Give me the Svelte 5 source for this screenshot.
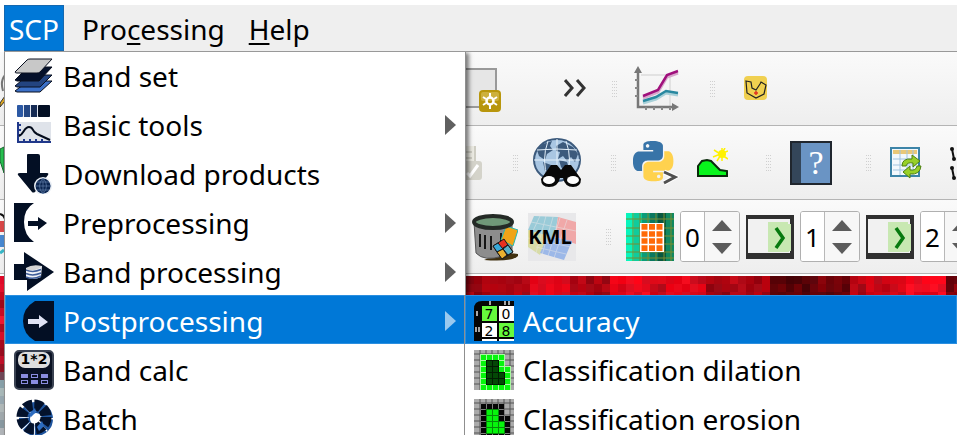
<script>
  const menus = [
    { before: 'Pro', key: 'c', after: 'essing' },
    { before: '', key: 'H', after: 'elp' }
  ];

  const entries = [
    { label: 'Band set', icon: bandSet },
    { label: 'Basic tools', icon: basicTools, sub: true },
    { label: 'Download products', icon: download },
    { label: 'Preprocessing', icon: preprocessing, sub: true },
    { label: 'Band processing', icon: bandProcessing, sub: true },
    { label: 'Postprocessing', icon: postprocessing, sub: true, active: true },
    { label: 'Band calc', icon: bandCalc },
    { label: 'Batch', icon: batch }
  ];

  const subEntries = [
    { label: 'Accuracy', icon: accuracy, active: true },
    { label: 'Classification dilation', icon: dilation },
    { label: 'Classification erosion', icon: erosion }
  ];

  let stretch = $state([
    { name: 'Band', value: '0' },
    { name: 'Minimum', value: '1' },
    { name: 'Maximum', value: '2' }
  ]);

  const step = (field, by) => (field.value = String(Number(field.value) + by));

  // raster cells of the map canvas: bright and dark stretches of red
  const brightness = [0.5, 0.55, 0.6, 0.85, 0.8, 0.65, 0.55, 0.8, 0.85, 0.7, 0.8, 0.75, 0.5, 0.6, 0.55, 0.2, 0.18, 0.3, 0.25, 0.6, 0.7, 0.7, 0.9, 0.9, 0.35];
  const cells = [];
  let seed = 11;
  const rnd = () => (seed = (seed * 16807) % 2147483647) / 2147483647;
  for (let row = 0; row < 3; row++) {
    for (let col = 0; col < 62; col++) {
      const b = brightness[Math.floor(col / 2.5)];
      const r = Math.round(Math.min(255, 50 + b * 215 + (rnd() - 0.5) * 50));
      const g = Math.round(rnd() * 18 * b);
      cells.push({ x: 466 + col * 8, y: row * 8, fill: `rgb(${r},${g},${Math.round(g + b * 22)})` });
    }
  }
  const edge = ['#e00a28', '#e4102c', '#c80a20', '#a00818', '#c80c24', '#f01830', '#b00c20', '#d81028', '#a80a1c', '#980c1e', '#c01028', '#901424', '#704858', '#88a0a8', '#a8b8b8', '#98a8b0', '#b0b8b8', '#a0a8ac', '#8898a0', '#b0b4b8'];

  const dilationInner = ['2,2', '3,2', '2,3', '3,3', '2,4', '3,4', '4,4', '2,5', '3,5', '4,5'];
  const dilationOuter = ['1,1', '2,1', '3,1', '4,1', '1,2', '4,2', '1,3', '4,3', '5,3', '1,4', '5,4', '1,5', '5,5', '1,6', '2,6', '3,6', '4,6', '5,6'];
  const at = (cell, axis) => Number(cell.split(',')[axis]) * 6 + 1;
</script>

{#snippet bandSet()}
  <svg class="icon" viewBox="0 0 40 40" aria-hidden="true">
    <g stroke="#0a1020" stroke-width="1" stroke-linejoin="round">
      <path d="M1 35 L14 25 H38 L26 36 H3Z" fill="#3b70c8" />
      <path d="M1 30 L14 19 H38 L26 31 H3Z" fill="#234480" />
      <path d="M1 24 L14 11 H38 L25 25 H3Z" fill="#04102a" />
      <path d="M1 16 L13 4 Q14 3 16 3 H38 L26 16 Q25 17 23 17 H3 Q1 17 1 16Z" fill="#c8c8c8" />
    </g>
  </svg>
{/snippet}

{#snippet basicTools()}
  <svg class="icon" viewBox="0 0 40 40" aria-hidden="true">
    <rect x="3" y="0" width="33" height="12" rx="1" fill="#dfe4ee" />
    <rect x="3" y="0" width="6" height="12" rx="1" fill="#2c59a4" />
    <rect x="10" y="0" width="6" height="12" fill="#244784" />
    <rect x="17" y="0" width="6" height="12" fill="#152b54" />
    <rect x="24" y="0" width="12" height="12" rx="1" fill="#030f24" />
    <rect x="4" y="17" width="33" height="21" fill="#dfe3ea" />
    <path d="M4 17V37H37M4 20H7M4 25H7M4 30H7M10 37V34M16 37V34M22 37V34M28 37V34" fill="none" stroke="#20388a" stroke-width="2" />
    <path d="M5 31C10 29 10 22 15 22C20 22 17 26 23 29L36 35" fill="none" stroke="#040c1c" stroke-width="2" />
  </svg>
{/snippet}

{#snippet download()}
  <svg class="icon" viewBox="0 0 40 40" aria-hidden="true">
    <path d="M13 1Q13 0 14 0H24Q26 0 26 2V19H33Q35 19 34 21L21 38Q19 39 18 38L4 21Q3 19 6 19H13Z" fill="#030f24" />
    <circle cx="29" cy="32" r="9" fill="#e8edf4" />
    <circle cx="29" cy="32" r="7.5" fill="#0b2550" />
    <path d="M22 32H37M23 28H35M23 36H35M29 24V40M29 24Q22 32 29 40M29 24Q36 32 29 40" fill="none" stroke="#5f7da8" stroke-width="0.7" />
  </svg>
{/snippet}

{#snippet preprocessing()}
  <svg class="icon" viewBox="0 0 40 40" aria-hidden="true">
    <path d="M0 0H20Q10 6 10 19T20 39H0Z" fill="#030f24" />
    <path d="M14 18H24V14L33 20L24 27V23H14Z" fill="#030f24" />
  </svg>
{/snippet}

{#snippet bandProcessing()}
  <svg class="icon" viewBox="0 0 40 40" aria-hidden="true">
    <path d="M0 12H10V0L40 20L13 39V28H0Z" fill="#030f24" />
    <path d="M12 16V25Q19 29 27 25L28 14Z" fill="#f0f2f6" />
    <g stroke="#3d5c98" stroke-width="1.5" fill="none">
      <path d="M12 25Q19 28 27 24" />
      <path d="M12 21.5Q19 24.500 27 21" />
      <path d="M12 18Q19 21 27 17.500" />
    </g>
    <path d="M12 16Q18 12 28 14Q24 19 14 18Z" fill="#d4d4d4" />
  </svg>
{/snippet}

{#snippet postprocessing()}
  <svg class="icon" viewBox="0 0 40 40" aria-hidden="true">
    <path d="M40 0H21Q9 7 9 20T21 40H40Z" fill="#030f24" />
    <path d="M14 18H25V14L34 21L25 27V23H14Z" fill="#dfe3f4" />
  </svg>
{/snippet}

{#snippet bandCalc()}
  <svg class="icon" viewBox="0 0 40 40" aria-hidden="true">
    <rect x="1" y="1" width="38" height="38" rx="4" fill="#0a1224" stroke="#3a4252" stroke-width="2" />
    <rect x="4" y="2" width="32" height="16" rx="7" fill="#dedede" />
    <text x="20" y="14" class="calc">1*2</text>
    <g fill="#8a8de0">
      <rect x="7" y="24" width="7" height="4" /><rect x="17" y="24" width="7" height="4" /><rect x="27" y="24" width="7" height="4" />
      <rect x="7" y="30" width="7" height="4" /><rect x="17" y="30" width="7" height="4" /><rect x="27" y="30" width="7" height="4" />
    </g>
    <path d="M18 26H23M8 32H13M28 32H33" stroke="#0a1224" stroke-width="2" />
  </svg>
{/snippet}

{#snippet batch()}
  <svg class="icon" viewBox="0 0 40 40" aria-hidden="true">
    <circle cx="22" cy="20" r="11.5" fill="none" stroke="#1f559f" stroke-width="11" />
    <circle cx="21" cy="19" r="12" fill="none" stroke="#fff" stroke-width="12" stroke-dasharray="1 8.420" />
    <circle cx="20" cy="18" r="12" fill="none" stroke="#04122c" stroke-width="11" stroke-dasharray="7.500 1.920" />
    <path d="M15 15L21 9L22 13L17 18ZM23 28L28 22L30 27L25 32Z" fill="#2d6cc0" />
  </svg>
{/snippet}

{#snippet accuracy()}
  <svg class="icon" viewBox="0 0 40 40" aria-hidden="true">
    <path d="M8 0H40V40H0V8Q0 0 8 0Z" fill="#050505" />
    <path d="M16 0V4M31 0V4M35 0V4M3 10V15M2 26V31M5 26V31" stroke="#fff" stroke-width="1.3" />
    <rect x="8" y="5" width="15" height="15" fill="#66fa3c" /><rect x="25" y="5" width="15" height="15" fill="#fff" />
    <rect x="8" y="22" width="15" height="14" fill="#fff" /><rect x="25" y="22" width="15" height="14" fill="#66fa3c" />
    <path d="M8 39H23M25 39H40" stroke="#fff" stroke-width="2" />
    <text x="15" y="18" class="digit">7</text><text x="32" y="18" class="digit">0</text>
    <text x="15" y="35" class="digit">2</text><text x="32" y="35" class="digit">8</text>
  </svg>
{/snippet}

{#snippet gridLines()}
  <rect width="40" height="40" fill="#aaa" />
  <path d="M6 0V40M12 0V40M18 0V40M24 0V40M30 0V40M36 0V40M0 4H40M0 10H40M0 16H40M0 22H40M0 28H40M0 34H40" stroke="#555" stroke-width="1" />
{/snippet}

{#snippet dilation()}
  <svg class="icon" viewBox="0 0 40 40" aria-hidden="true">
    {@render gridLines()}
    <g transform="translate(0 -2)">
      {#each dilationOuter as c}<rect x={at(c, 0) - 1} y={at(c, 1) - 1} width="7" height="7" fill="#a8f8a0" /><rect x={at(c, 0)} y={at(c, 1)} width="5" height="5" fill="#06f50c" />{/each}
      {#each dilationInner as c}<rect x={at(c, 0) - 1} y={at(c, 1) - 1} width="7" height="7" fill="#021c02" /><rect x={at(c, 0)} y={at(c, 1)} width="5" height="5" fill="#044806" />{/each}
    </g>
  </svg>
{/snippet}

{#snippet erosion()}
  <svg class="icon" viewBox="0 0 40 40" aria-hidden="true">
    {@render gridLines()}
    <g transform="translate(0 -2)">
      {#each dilationOuter as c}<rect x={at(c, 0)} y={at(c, 1)} width="5" height="5" fill="#050505" />{/each}
      {#each dilationInner as c}<rect x={at(c, 0) - 1} y={at(c, 1) - 1} width="7" height="7" fill="#068a0a" /><rect x={at(c, 0)} y={at(c, 1)} width="5" height="5" fill="#06f50c" />{/each}
    </g>
  </svg>
{/snippet}

{#snippet entry(item)}
  <li>
    <button class="entry" class:active={item.active} role="menuitem">
      {@render item.icon()}
      <span class="label">{item.label}</span>
      {#if item.sub}
        <svg class="arrow" viewBox="0 0 12 20" aria-hidden="true"><path d="M0 0L11 10L0 20Z" fill="currentColor" /></svg>
      {/if}
    </button>
  </li>
{/snippet}

{#snippet applyIcon()}
  <svg width="48" height="44" viewBox="0 0 48 44">
    <rect width="48" height="44" fill="#303030" />
    <rect x="2" y="4" width="42" height="34" fill="#f1f1f1" />
    <path d="M22 7H42V9H45V36H43V37H22Z" fill="#c8e8b2" />
    <path d="M30 13L37 23L30 33" fill="none" stroke="#087a10" stroke-width="3.5" />
  </svg>
{/snippet}

{#snippet snake(fill, turn)}
  <path {fill} transform="rotate({turn} 12 12)" d="M14.25.18l.9.2.73.26.59.3.45.32.34.34.25.34.16.33.1.3.04.26.02.2-.01.13V8.5l-.05.63-.13.55-.21.46-.26.38-.3.31-.33.25-.35.19-.35.14-.33.1-.3.07-.26.04-.21.02H8.77l-.69.05-.59.14-.5.22-.41.27-.33.32-.27.35-.2.36-.15.37-.1.35-.07.32-.04.27-.02.21v3.06H3.17l-.21-.03-.28-.07-.32-.12-.35-.18-.36-.26-.36-.36-.35-.46-.32-.59-.28-.73-.21-.88-.14-1.05-.05-1.23.06-1.22.16-1.04.24-.87.32-.71.36-.57.4-.44.42-.33.42-.24.4-.16.36-.1.32-.05.24-.01h.16l.06.01h8.16v-.83H6.18l-.01-2.75-.02-.37.05-.34.11-.31.17-.28.25-.26.31-.23.38-.2.44-.18.51-.15.58-.12.64-.1.71-.06.77-.04.84-.02 1.27.05zm-6.3 1.98l-.23.33-.08.41.08.41.23.34.33.22.41.09.41-.09.33-.22.23-.34.08-.41-.08-.41-.23-.33-.33-.22-.41-.09-.41.09z" />
{/snippet}

<main>
  <nav class="menubar">
    <button class="open">SCP</button>
    {#each menus as m}
      <button>{m.before}<u>{m.key}</u>{m.after}</button>
    {/each}
  </nav>

  <div class="toolbar">
    <span class="covered">
      <svg width="4" height="72" viewBox="0 0 4 72"><path d="M5 22Q0 28 3 38" fill="none" stroke="#777" stroke-width="2" /><path d="M0 50L5 43V48L0 54Z" fill="#e0a820" stroke="#333" /></svg>
    </span>
    <button class="tool" aria-label="New layout">
      <svg width="36" height="46" viewBox="0 0 36 46">
        <rect x="-5" y="3" width="35" height="38" fill="#e6e6e6" stroke="#999" stroke-width="2" />
        <rect x="13" y="24" width="22" height="22" rx="4" fill="#b8960c" /><rect x="15" y="26" width="18" height="9" rx="2" fill="#cdb03c" />
        <circle cx="24" cy="35" r="3.5" fill="none" stroke="#fff" stroke-width="2.5" />
        <path d="M24 27V31M24 39V43M17 31L20 33M28 37L31 39M17 39L20 37M28 33L31 31" stroke="#fff" stroke-width="2" />
      </svg>
    </button>
    <button class="tool g62" aria-label="More tools">
      <svg width="24" height="20" viewBox="0 0 24 20"><path d="M1 1L8 9L1 17M13 1L20 9L13 17" fill="none" stroke="#333" stroke-width="3" /></svg>
    </button>
    <i class="grip g24"></i>
    <button class="tool g16" aria-label="Plot">
      <svg width="46" height="46" viewBox="0 0 46 46">
        <path d="M7 9H36V40" fill="none" stroke="#e2e2e2" stroke-width="2" />
        <path d="M4 4V41H42" fill="none" stroke="#777" stroke-width="2.5" />
        <path d="M0 7L4 0L8 7ZM38 37L45 41L38 45Z" fill="#777" />
        <path d="M1 14H4M1 22H4M1 30H4M12 41V44M20 41V44M28 41V44M36 41V44" stroke="#888" stroke-width="2" />
        <path d="M9 32L24 26L33 11L44 7" fill="none" stroke="#d8a8cc" stroke-width="3" /><path d="M9 30L24 24L33 9L44 5" fill="none" stroke="#a0107c" stroke-width="2.5" />
        <path d="M9 37L22 33L32 27L44 29" fill="none" stroke="#a8d0d8" stroke-width="3" /><path d="M9 35L22 31L32 25L44 27" fill="none" stroke="#2888a0" stroke-width="2.5" />
      </svg>
    </button>
    <i class="grip g30"></i>
    <button class="tool g28" aria-label="Digitize">
      <svg width="24" height="26" viewBox="0 0 24 26">
        <rect width="23" height="24" rx="4" fill="#f0d050" />
        <path d="M2 5L7 6L8 12L12 14L16 8L17 6L22 9L20 18L12 22L3 17Z" fill="none" stroke="#222" stroke-width="1.2" />
        <path d="M10 17H14M12 15V19" stroke="#e03020" stroke-width="1.5" />
      </svg>
    </button>
  </div>

  <div class="toolbar">
    <span class="covered">
      <svg width="4" height="72" viewBox="0 0 4 72"><path d="M0 22L4 20V46L0 34Z" fill="#28c050" stroke="#186830" /></svg>
    </span>
    <button class="tool" aria-label="Edit form">
      <svg width="17" height="34" viewBox="0 2 17 34">
        <rect x="-6" y="0" width="15" height="32" fill="#ecebe3" stroke="#cfcec4" stroke-width="2" /><path d="M0 8H6M0 14H6" stroke="#cfcec4" stroke-width="2" />
        <rect x="-4" y="17" width="20" height="19" rx="3" fill="#d4d3ca" /><path d="M1 29L4 32L12 21" fill="none" stroke="#fff" stroke-width="3" />
      </svg>
    </button>
    <i class="grip g30"></i>
    <button class="tool g14" aria-label="Search the web">
      <svg width="48" height="50" viewBox="0 0 48 50">
        <ellipse cx="24" cy="22" rx="23" ry="21" fill="#a9c6e2" stroke="#3c5a7c" stroke-width="2" />
        <path d="M4 12L10 6L19 3L17 8L20 12L14 16L12 22L6 18ZM10 24L18 27L17 34L13 38ZM23 8L30 4L40 9L45 16L42 24L38 19L34 23L30 18L25 21L27 14L23 13ZM26 22L34 24L36 30L32 34L28 29Z" fill="#3c5a7c" />
        <path d="M4 12Q24 10 44 12M1 22H47M24 1V42M15 3Q8 22 15 41M33 3Q40 22 33 41" fill="none" stroke="#e4f0fa" stroke-width="1" />
        <path d="M8 41L18 27H24L28 32L32 27H38L48 41Q48 49 40 49Q32 49 30 40H27Q25 49 16 49Q8 49 8 41Z" fill="#080808" />
        <ellipse cx="16" cy="42" rx="6" ry="4" fill="#fff" /><ellipse cx="40" cy="42" rx="6" ry="4" fill="#fff" />
      </svg>
    </button>
    <i class="grip g30"></i>
    <button class="tool g16" aria-label="Python console">
      <svg width="46" height="44" viewBox="0 0 46 44">
        <g transform="scale(1.68)">
          {@render snake('#3874a8', 0)}
          {@render snake('#ffd24e', 180)}
        </g>
        <path d="M31 31L42 36L31 42" fill="none" stroke="#fff" stroke-width="5" /><path d="M31 31L42 36L31 42" fill="none" stroke="#505050" stroke-width="3" />
      </svg>
    </button>
    <button class="tool g18" aria-label="Terrain">
      <svg width="31" height="30" viewBox="0 0 31 30">
        <path d="M1 28V18L5 13L10 12L14 13L23 22L30 23V28Z" fill="#08f51c" stroke="#0a2a0a" stroke-width="2" />
        <circle cx="25" cy="6" r="4" fill="#fff200" /><path d="M25 -1V13M17 2L31 11M16 9L31 3M20 13L28 0" stroke="#fff200" stroke-width="1.5" />
      </svg>
    </button>
    <i class="grip g38"></i>
    <button class="tool g18" aria-label="Help">
      <svg width="42" height="44" viewBox="0 0 42 44">
        <rect x="1" y="1" width="40" height="42" fill="#6a94c4" stroke="#20262e" stroke-width="2" /><rect x="2" y="2" width="9" height="40" fill="#34465a" />
        <text x="26" y="33" class="question">?</text>
      </svg>
    </button>
    <i class="grip g34"></i>
    <button class="tool g18" aria-label="Refresh table">
      <svg width="32" height="32" viewBox="0 0 32 32">
        <rect x="1" y="1" width="28" height="28" fill="#f2f8fc" stroke="#3c84a8" stroke-width="2" />
        <rect x="3" y="3" width="24" height="4" fill="#e8c878" /><path d="M3 12H27M3 18H27M3 23H27M10 3V28M17 3V28M23 3V28" stroke="#a0c4e0" stroke-width="1" />
        <path d="M12 19Q12 11 22 12V8L30 14L23 20V16Q17 15 16 19Z" fill="#98d028" stroke="#4c8010" />
        <path d="M31 19Q30 28 20 27V31L13 25L20 19V23Q26 24 27 19Z" fill="#98d028" stroke="#4c8010" />
      </svg>
    </button>
    <button class="tool g28" aria-label="Nodes">
      <svg width="8" height="34" viewBox="0 0 8 34"><path d="M2 3L4 13M2 22L4 32" stroke="#111" stroke-width="2" /><g fill="#111"><circle cx="2" cy="3" r="2" /><circle cx="4" cy="13" r="2" /><circle cx="2" cy="22" r="2" /><circle cx="4" cy="32" r="2" /></g></svg>
    </button>
  </div>

  <div class="toolbar">
    <span class="covered">
      <svg width="4" height="72" viewBox="0 0 4 72"><path d="M0 13Q4 14 5 18" fill="none" stroke="#111" stroke-width="2" /><rect y="20" width="4" height="11" fill="#d84848" /><rect y="34" width="4" height="12" fill="#4888d0" /><path d="M0 52L4 49" stroke="#38b8c8" stroke-width="3" /></svg>
    </span>
    <button class="tool g6" aria-label="Delete bands">
      <svg width="46" height="48" viewBox="0 0 46 48">
        <path d="M12 47Q30 38 46 41V43Q40 49 12 47Z" fill="#403010" />
        <path d="M2 9L4 40Q12 49 31 43L40 38V9Z" fill="#8d8d8d" stroke="#555" />
        <path d="M8 21V34M13 22V36M19 23V37M29 20V33" stroke="#161616" stroke-width="2" />
        <path d="M34 13L46 17L41 33L29 27Z" fill="#f0a418" stroke="#28b8b0" />
        <ellipse cx="21" cy="9" rx="19" ry="6" fill="#6f9878" stroke="#242a26" stroke-width="4" />
        <g stroke="#181818"><path d="M21 33L32 26L36 32L25 39Z" fill="#e83020" /><path d="M25 39L36 32L41 39L30 46Z" fill="#284fb0" /><path d="M21 33L26 30L31 36L25 39Z" fill="#38a8d8" /><path d="M31 36L36 32L41 39L36 42Z" fill="#58b0c8" /><path d="M25 39L31 36L35 42L30 46Z" fill="#e8b030" /></g>
      </svg>
    </button>
    <button class="tool g10" aria-label="Export KML">
      <svg width="48" height="48" viewBox="0 0 48 48">
        <rect width="48" height="48" fill="#e8e8ea" />
        <path d="M6 3L30 4L26 25L0 17Z" fill="#9acbd8" /><path d="M30 4L48 9V31L27 24Z" fill="#f0a8a8" /><path d="M0 17L20 23L12 42L0 34Z" fill="#d8dca8" /><path d="M20 23L44 28L36 47L12 40Z" fill="#9cb8e8" />
        <path d="M12 3L4 20M18 3L8 40M25 4L14 42M32 5L20 43M39 7L26 45M3 9L48 18M0 25L43 34M8 34L38 41" stroke="#e8e8ea" stroke-width="1" opacity=".5" />
        <text x="22" y="31" class="kml">KML</text>
      </svg>
    </button>
    <i class="grip g30"></i>
    <button class="tool g14" aria-label="Region growing">
      <svg width="48" height="48" viewBox="0 0 48 48">
        <rect width="8" height="48" fill="#08f5bc" /><rect x="8" width="8" height="48" fill="#10cc9c" /><rect x="16" width="8" height="48" fill="#0c9c78" /><rect x="24" width="8" height="48" fill="#0a7860" /><rect x="32" width="8" height="48" fill="#085840" /><rect x="40" width="8" height="48" fill="#108860" />
        <path d="M7 0V48M14 0V48M22 0V48M30 0V48M38 0V48M45 0V48M0 6H48M0 15H48M0 23H48M0 31H48M0 39H48M0 45H48" stroke="#788c30" stroke-width="1" />
        <rect x="14" y="10" width="24" height="29" fill="#fff" />
        <path d="M18.500 11V38M26 11V38M33.500 11V38" stroke="#ff6a08" stroke-width="6" /><path d="M14 17.500H38M14 24.500H38M14 31.500H38" stroke="#fff" stroke-width="1.5" />
      </svg>
    </button>
    {#each stretch as field, i}
      <span class="spin g6">
        <input type="text" aria-label={field.name} bind:value={field.value} />
        <span class="steps">
          <button aria-label="Increase {field.name}" onclick={() => step(field, 1)}><svg width="20" height="11" viewBox="0 0 20 11"><path d="M0 11L10 0L20 11Z" fill="#5c5c5c" /></svg></button>
          <button aria-label="Decrease {field.name}" onclick={() => step(field, -1)}><svg width="20" height="11" viewBox="0 0 20 11"><path d="M0 0L10 11L20 0Z" fill="#5c5c5c" /></svg></button>
        </span>
      </span>
      {#if i < 2}
        <button class="tool g6" aria-label="Apply {field.name}">{@render applyIcon()}</button>
      {/if}
    {/each}
  </div>

  <div class="map">
    <svg width="100%" height="100%" shape-rendering="crispEdges" aria-hidden="true">
      {#each edge as fill, i}<rect x="0" y={i * 8} width="5" height="8" {fill} />{/each}
      {#each cells as c}<rect x={c.x} y={c.y} width="8" height="8" fill={c.fill} />{/each}
    </svg>
  </div>

  <ul class="menu" role="menu" aria-label="SCP">
    {#each entries as item}{@render entry(item)}{/each}
  </ul>
  <ul class="menu submenu" role="menu" aria-label="Postprocessing">
    {#each subEntries as item}{@render entry(item)}{/each}
  </ul>
</main>

<style>
  :global(body) {
    background: #fff;
  }
  main {
    position: relative;
    height: 100vh;
    overflow: hidden;
    display: flex;
    flex-direction: column;
    box-sizing: border-box;
    padding-top: 5px;
    font: 28px/36px 'Noto Sans', 'Open Sans', sans-serif;
    color: #000;
  }
  button {
    font: inherit;
    color: inherit;
    background: none;
    border: 0;
    margin: 0;
    padding: 0;
  }
  svg {
    display: block;
  }
  .menubar {
    position: relative;
    z-index: 3;
    flex: none;
    display: flex;
    height: 46px;
    margin-left: 4px;
    background: #efefef;
    border-bottom: 1px solid #999;
  }
  .menubar button {
    padding: 2px 12px 0;
  }
  .menubar .open {
    padding: 2px 4px 0;
    margin-right: 6px;
    min-width: 60px;
    background: #0078d7;
    color: #fff;
    box-shadow: inset 0 0 0 1px #1468b0;
  }
  u {
    text-underline-offset: 3px;
    text-decoration-thickness: 2px;
    text-decoration-skip-ink: none;
  }
  .toolbar {
    flex: none;
    display: flex;
    align-items: center;
    height: 74px;
    box-sizing: border-box;
    background: linear-gradient(#fafafa, #eee);
    border-bottom: 1px solid #b4b4b4;
    overflow: hidden;
  }
  .covered {
    flex: none;
    width: 466px;
  }
  .tool,
  .grip,
  .spin {
    flex: none;
  }
  .grip {
    width: 5px;
    height: 16px;
    margin-right: 1px;
    background: conic-gradient(#b8b8b8 25%, transparent 0) -1px 0 / 2px 3px;
    opacity: 0.6;
  }
  .g6 { margin-left: 6px; }
  .g10 { margin-left: 10px; }
  .g14 { margin-left: 14px; }
  .g16 { margin-left: 16px; }
  .g18 { margin-left: 18px; }
  .g24 { margin-left: 24px; }
  .g28 { margin-left: 28px; }
  .g30 { margin-left: 30px; }
  .g34 { margin-left: 34px; }
  .g38 { margin-left: 38px; }
  .g62 { margin-left: 62px; }
  .spin {
    display: flex;
    width: 60px;
    height: 51px;
    box-sizing: border-box;
    border: 1px solid #b0b0b0;
    border-radius: 3px;
    overflow: hidden;
    background: #fff;
  }
  .spin input {
    width: 24px;
    box-sizing: border-box;
    border: 0;
    border-right: 1px solid #b8b8b8;
    padding: 0;
    font: 26px/48px 'Noto Sans', sans-serif;
    text-align: center;
    color: #000;
    background: #fff;
  }
  .steps {
    flex: 1;
    display: flex;
    flex-direction: column;
    justify-content: center;
    align-items: center;
    gap: 12px;
    background: #f7f7f7;
  }
  .map {
    flex: 1;
    min-height: 0;
    margin-top: 2px;
    background: #fff;
  }
  .menu {
    position: absolute;
    z-index: 1;
    top: 50px;
    left: 4px;
    width: 460px;
    margin: 0;
    padding: 0;
    list-style: none;
    background: #fff;
    border: solid #8f8f8f;
    border-width: 0 1px;
    box-shadow: 3px 3px 4px rgba(0, 0, 0, 0.5);
  }
  .submenu {
    z-index: 2;
    top: 295px;
    left: 464px;
    right: 0;
    width: auto;
    border-width: 0 0 0 1px;
    box-shadow: none;
  }
  .entry {
    display: flex;
    align-items: center;
    width: 100%;
    height: 49px;
    box-sizing: border-box;
    padding: 2px 8px 0 9px;
    text-align: left;
    white-space: nowrap;
  }
  .entry.active {
    background: #0078d7;
    color: #fff;
    box-shadow: inset 0 0 0 1px #2b8fe0;
  }
  .icon {
    flex: none;
    width: 40px;
    height: 40px;
  }
  .label {
    flex: 1;
    margin-left: 9px;
  }
  .arrow {
    width: 12px;
    height: 20px;
    color: #606060;
  }
  .active .arrow {
    color: #99c9ef;
  }
  .calc {
    font: bold 14px 'DejaVu Sans', sans-serif;
    text-anchor: middle;
  }
  .digit {
    font: 14px 'DejaVu Sans', sans-serif;
    text-anchor: middle;
  }
  .question {
    font: 34px 'Liberation Serif', serif;
    text-anchor: middle;
    fill: #fff;
  }
  .kml {
    font: bold 20px 'Open Sans', sans-serif;
    text-anchor: middle;
  }
</style>
